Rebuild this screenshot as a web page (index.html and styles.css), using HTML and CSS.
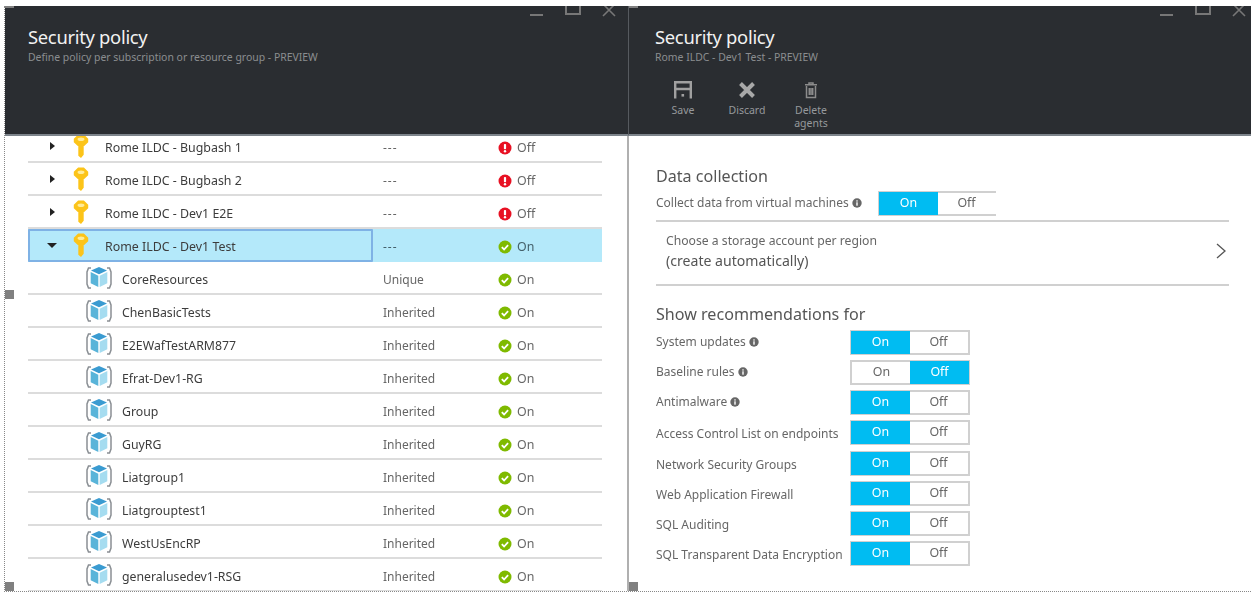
FILE: index.html
```html
<!DOCTYPE html>
<html lang="en">
<head>
    <meta charset="UTF-8">
    <title>Security policy</title>
    <link rel="stylesheet" href="styles.css">
</head>
<body>

<svg class="defs" width="0" height="0">
    <symbol id="key" viewBox="0 0 18 26">
        <path fill="#fcc419" d="M6 .5h6l4.500 4.500v3.500L12.300 12.500h-.5V21.500L9 25 6.200 22.500V12.500H5.700L1.500 8.500V5z"/>
        <ellipse cx="9" cy="5.500" rx="3.600" ry="1.900" fill="#ffec99"/>
    </symbol>
    <symbol id="cube" viewBox="0 0 26 24">
        <path fill="none" stroke="#8a8f94" stroke-width="1.500" d="M5 2H2.500L1 6v12l1.500 4H5M21 2h2.500L25 6v12l-1.500 4H21"/>
        <path fill="#3a9bd1" d="M13 1l8 3.500-8 3.800-8-3.800z"/>
        <path fill="#59b4d9" d="M4.700 6L12.300 9.700V21L4.700 17.300z"/>
        <path fill="#a5dcf0" d="M21.300 6L13.700 9.700V21l7.600-3.700z"/>
    </symbol>
    <symbol id="off-icon" viewBox="0 0 14 14">
        <circle cx="7" cy="7" r="6.500" fill="#e81123"/>
        <rect x="5.900" y="3" width="2.200" height="5.200" rx=".8" fill="#fff"/>
        <circle cx="7" cy="10.200" r="1.200" fill="#fff"/>
    </symbol>
    <symbol id="on-icon" viewBox="0 0 14 14">
        <circle cx="7" cy="7" r="6.500" fill="#7fba00"/>
        <path fill="none" stroke="#fff" stroke-width="1.800" d="M3.800 7.200l2.300 2.300 4-4.300"/>
    </symbol>
    <symbol id="info" viewBox="0 0 10 10">
        <circle cx="5" cy="5" r="4.700" fill="#666"/>
        <rect x="4.300" y="4.300" width="1.400" height="3.400" fill="#fff"/>
        <rect x="4.300" y="2.300" width="1.400" height="1.300" fill="#fff"/>
    </symbol>
</svg>

<div class="screen">

    <!-- Policy list -->
    <section class="blade blade-left">
        <header class="blade-head">
            <div class="win-controls">
                <svg width="14" height="12" viewBox="0 0 14 12"><path stroke="#777" stroke-width="2" d="M0 9h13"/></svg>
                <svg width="16" height="12" viewBox="0 0 16 12"><path fill="none" stroke="#777" stroke-width="2" d="M1 0v8h14V0"/></svg>
                <svg width="14" height="12" viewBox="0 0 14 12"><path fill="none" stroke="#777" stroke-width="1.600" d="M1-2l12 12M13-2L1 10"/></svg>
            </div>
            <h2 class="blade-title">Security policy</h2>
            <p class="blade-sub">Define policy per subscription or resource group - PREVIEW</p>
        </header>

        <div class="tree">
            <div class="row"><div class="cell-name"><i class="arrow"></i><svg class="key"><use href="#key"/></svg>Rome ILDC - Bugbash 1</div><div class="cell-type dashes">---</div><div class="cell-status"><svg class="status-icon"><use href="#off-icon"/></svg>Off</div></div>
            <div class="row"><div class="cell-name"><i class="arrow"></i><svg class="key"><use href="#key"/></svg>Rome ILDC - Bugbash 2</div><div class="cell-type dashes">---</div><div class="cell-status"><svg class="status-icon"><use href="#off-icon"/></svg>Off</div></div>
            <div class="row"><div class="cell-name"><i class="arrow"></i><svg class="key"><use href="#key"/></svg>Rome ILDC - Dev1 E2E</div><div class="cell-type dashes">---</div><div class="cell-status"><svg class="status-icon"><use href="#off-icon"/></svg>Off</div></div>
            <div class="row selected"><div class="cell-name"><i class="arrow open"></i><svg class="key"><use href="#key"/></svg>Rome ILDC - Dev1 Test</div><div class="cell-type dashes">---</div><div class="cell-status"><svg class="status-icon"><use href="#on-icon"/></svg>On</div></div>
            <div class="row child"><div class="cell-name"><svg class="cube"><use href="#cube"/></svg>CoreResources</div><div class="cell-type">Unique</div><div class="cell-status"><svg class="status-icon"><use href="#on-icon"/></svg>On</div></div>
            <div class="row child"><div class="cell-name"><svg class="cube"><use href="#cube"/></svg>ChenBasicTests</div><div class="cell-type">Inherited</div><div class="cell-status"><svg class="status-icon"><use href="#on-icon"/></svg>On</div></div>
            <div class="row child"><div class="cell-name"><svg class="cube"><use href="#cube"/></svg>E2EWafTestARM877</div><div class="cell-type">Inherited</div><div class="cell-status"><svg class="status-icon"><use href="#on-icon"/></svg>On</div></div>
            <div class="row child"><div class="cell-name"><svg class="cube"><use href="#cube"/></svg>Efrat-Dev1-RG</div><div class="cell-type">Inherited</div><div class="cell-status"><svg class="status-icon"><use href="#on-icon"/></svg>On</div></div>
            <div class="row child"><div class="cell-name"><svg class="cube"><use href="#cube"/></svg>Group</div><div class="cell-type">Inherited</div><div class="cell-status"><svg class="status-icon"><use href="#on-icon"/></svg>On</div></div>
            <div class="row child"><div class="cell-name"><svg class="cube"><use href="#cube"/></svg>GuyRG</div><div class="cell-type">Inherited</div><div class="cell-status"><svg class="status-icon"><use href="#on-icon"/></svg>On</div></div>
            <div class="row child"><div class="cell-name"><svg class="cube"><use href="#cube"/></svg>Liatgroup1</div><div class="cell-type">Inherited</div><div class="cell-status"><svg class="status-icon"><use href="#on-icon"/></svg>On</div></div>
            <div class="row child"><div class="cell-name"><svg class="cube"><use href="#cube"/></svg>Liatgrouptest1</div><div class="cell-type">Inherited</div><div class="cell-status"><svg class="status-icon"><use href="#on-icon"/></svg>On</div></div>
            <div class="row child"><div class="cell-name"><svg class="cube"><use href="#cube"/></svg>WestUsEncRP</div><div class="cell-type">Inherited</div><div class="cell-status"><svg class="status-icon"><use href="#on-icon"/></svg>On</div></div>
            <div class="row child"><div class="cell-name"><svg class="cube"><use href="#cube"/></svg>generalusedev1-RSG</div><div class="cell-type">Inherited</div><div class="cell-status"><svg class="status-icon"><use href="#on-icon"/></svg>On</div></div>
        </div>
    </section>

    <!-- Policy details -->
    <section class="blade blade-right">
        <header class="blade-head">
            <div class="win-controls">
                <svg width="14" height="12" viewBox="0 0 14 12"><path stroke="#777" stroke-width="2" d="M0 9h13"/></svg>
                <svg width="16" height="12" viewBox="0 0 16 12"><path fill="none" stroke="#777" stroke-width="2" d="M1 0v8h14V0"/></svg>
                <svg width="14" height="12" viewBox="0 0 14 12"><path fill="none" stroke="#777" stroke-width="1.600" d="M1-2l12 12M13-2L1 10"/></svg>
            </div>
            <h2 class="blade-title">Security policy</h2>
            <p class="blade-sub">Rome ILDC - Dev1 Test - PREVIEW</p>
            <div class="commands">
                <div class="command">
                    <svg width="18" height="18" viewBox="0 0 18 18"><path fill="none" stroke="#a0a0a0" stroke-width="2.400" d="M1.200 17.500V1.200h15.600v16.300M1.200 8h15.600"/><rect x="7.500" y="13" width="2.600" height="2.600" fill="#a0a0a0"/></svg>
                    <span>Save</span>
                </div>
                <div class="command">
                    <svg width="18" height="18" viewBox="0 0 18 18"><path fill="none" stroke="#a8a8a8" stroke-width="4" d="M2.500 2.500l13 13M15.500 2.500l-13 13"/></svg>
                    <span>Discard</span>
                </div>
                <div class="command">
                    <svg width="18" height="18" viewBox="0 0 18 18"><path fill="none" stroke="#8c8c8c" stroke-width="1.500" d="M4.500 5v11.500h9V5M3 3.800h12M7 3.800V2h4v1.800M7.300 7v7M9 7v7M10.700 7v7"/></svg>
                    <span>Delete agents</span>
                </div>
            </div>
        </header>

        <div class="details">
            <h3 class="section-title">Data collection</h3>
            <div class="setting collect">
                <span class="setting-label has-info">Collect data from virtual machines <svg class="info"><use href="#info"/></svg></span>
                <div class="toggle open-end"><span class="active">On</span><span>Off</span></div>
            </div>

            <div class="storage">
                <div>
                    <p class="storage-title">Choose a storage account per region</p>
                    <p class="storage-value">(create automatically)</p>
                </div>
                <svg width="10" height="16" viewBox="0 0 10 16"><path fill="none" stroke="#555" stroke-width="1.300" d="M1 1l8 7-8 7"/></svg>
            </div>

            <h3 class="section-title recs-title">Show recommendations for</h3>
            <div class="settings">
                <div class="setting"><span class="setting-label has-info">System updates <svg class="info"><use href="#info"/></svg></span><div class="toggle"><span class="active">On</span><span>Off</span></div></div>
                <div class="setting"><span class="setting-label has-info">Baseline rules <svg class="info"><use href="#info"/></svg></span><div class="toggle"><span>On</span><span class="active">Off</span></div></div>
                <div class="setting"><span class="setting-label has-info">Antimalware <svg class="info"><use href="#info"/></svg></span><div class="toggle"><span class="active">On</span><span>Off</span></div></div>
                <div class="setting"><span class="setting-label">Access Control List on endpoints</span><div class="toggle"><span class="active">On</span><span>Off</span></div></div>
                <div class="setting"><span class="setting-label">Network Security Groups</span><div class="toggle"><span class="active">On</span><span>Off</span></div></div>
                <div class="setting"><span class="setting-label">Web Application Firewall</span><div class="toggle"><span class="active">On</span><span>Off</span></div></div>
                <div class="setting"><span class="setting-label">SQL Auditing</span><div class="toggle"><span class="active">On</span><span>Off</span></div></div>
                <div class="setting"><span class="setting-label">SQL Transparent Data Encryption</span><div class="toggle"><span class="active">On</span><span>Off</span></div></div>
            </div>
        </div>
    </section>

    <!-- Selection handles from the pasted picture -->
    <i class="handle handle-mid"></i>
    <i class="handle handle-low"></i>
    <i class="handle handle-center"></i>
    <i class="handle-top handle-top-left"></i>
    <i class="handle-top handle-top-center"></i>
</div>

</body>
</html>
```

FILE: styles.css
```css
* {
    box-sizing: border-box;
}

body {
    margin: 0;
    height: 596px;
    background-color: #fff;
    font-family: "Noto Sans", "Open Sans", sans-serif;
    color: #555;
    overflow: hidden;
}

.defs {
    display: block;
    height: 0;
}

p, h2, h3 {
    margin: 0;
    font-weight: normal;
}

.screen {
    position: relative;
    display: flex;
    width: 1247px;
    height: 586px;
    margin: 6px 0 0 4px;
    border-left: 1px dotted #888;
    border-bottom: 1px dotted #888;
    filter: blur(0.35px);
}

.blade {
    display: flex;
    flex-direction: column;
    height: 100%;
    overflow: hidden;
}

.blade-left {
    width: 624px;
    flex: none;
}

.blade-right {
    flex: 1;
    min-width: 0;
}

.blade-head {
    position: relative;
    flex: none;
    height: 130px;
    background-color: #2a2d31;
    border-bottom: 2px solid #7d848b;
    padding: 19px 0 0 23px;
}

.blade-left .blade-head {
    border-right: 1px solid #565a5f;
}

.blade-right .blade-head {
    padding-left: 26px;
}

.blade-title {
    font-size: 18.400px;
    line-height: 24px;
    color: #f2f2f2;
    letter-spacing: -0.300px;
}

.blade-sub {
    font-size: 10.450px;
    line-height: 14px;
    margin-top: 1px;
    color: #8a8d90;
}

.win-controls {
    position: absolute;
    top: 0;
    right: 12px;
    display: flex;
    gap: 21px;
}

.blade-right .win-controls {
    right: 5px;
}

/* command bar */
.commands {
    display: flex;
    margin: 17px 0 0 -4px;
}

.command {
    display: flex;
    flex-direction: column;
    align-items: center;
    width: 64px;
    font-size: 10.500px;
    line-height: 13px;
    color: #96999c;
    text-align: center;
}

.command svg {
    margin-bottom: 5px;
}

.command span {
    width: 40px;
}

/* tree list */
.tree {
    flex: 1;
    margin-top: -6px;
    padding: 0 25px 0 23px;
    border-right: 2px solid #b0b0b0;
}

.row {
    display: flex;
    align-items: center;
    height: 33px;
    padding-top: 4px;
    font-size: 12.400px;
    border-bottom: 2px solid #dcdcdc;
}

.cell-name {
    display: flex;
    align-items: center;
    width: 345px;
    height: 100%;
    padding-left: 22px;
    color: #3c3c3c;
    flex: none;
}

.child .cell-name {
    padding-left: 58px;
    font-size: 12.300px;
}

.cell-type {
    width: 125px;
    padding-left: 10px;
    font-size: 12px;
    color: #666;
    flex: none;
}

.dashes {
    letter-spacing: 1px;
}

.cell-status {
    display: flex;
    align-items: center;
    font-size: 12.400px;
    color: #666;
}

.arrow {
    width: 0;
    height: 0;
    margin-right: 17px;
    margin-top: -3px;
    border-top: 4.500px solid transparent;
    border-bottom: 4.500px solid transparent;
    border-left: 5px solid #222;
}

.arrow.open {
    margin-left: -3px;
    margin-right: 15px;
    border-left: 5.500px solid transparent;
    border-right: 5.500px solid transparent;
    border-top: 5px solid #222;
    border-bottom: 0;
}

.key {
    width: 18px;
    height: 25px;
    margin: -3px 15px 0 0;
    flex: none;
}

.cube {
    width: 26px;
    height: 24px;
    margin: -3px 10px 0 0;
    flex: none;
}

.status-icon {
    width: 14px;
    height: 14px;
    margin-right: 5px;
    flex: none;
}

.selected {
    background-color: #b4e9fa;
    border-bottom: 0;
    padding-top: 0;
}

.selected .cell-name {
    border: 2px solid #7fb2e5;
    padding: 2px 0 0 20px;
    border-radius: 1px;
}

.selected .cell-type,
.selected .cell-status {
    margin-top: 2px;
    color: #44606a;
}

/* settings panel */
.details {
    padding: 28px 22px 0 27px;
}

.section-title {
    font-size: 16.100px;
    line-height: 24px;
    color: #555;
}

.recs-title {
    margin-top: 16px;
}

.setting {
    display: flex;
    align-items: center;
    justify-content: space-between;
    width: 314px;
    font-size: 12px;
    color: #666;
}

.setting-label {
    display: flex;
    align-items: center;
    gap: 3px;
    padding-top: 2px;
    white-space: nowrap;
}

.has-info {
    padding: 0 0 2px;
}

.collect {
    width: 340px;
    margin-top: 3px;
    padding-bottom: 4px;
}

.info {
    width: 10px;
    height: 10px;
}

.settings {
    display: flex;
    flex-direction: column;
    gap: 5.150px;
    margin-top: 4px;
}

.toggle {
    display: flex;
    width: 120px;
    height: 25px;
    border: 2px solid #d0d0d0;
    font-size: 12.400px;
    background-color: #fff;
}

.toggle span {
    flex: 1;
    text-align: center;
    line-height: 20px;
    color: #666;
}

.toggle .active {
    background-color: #00bcf2;
    color: #fff;
    margin: -1px;
    line-height: 22px;
}

.open-end {
    border-right: 0;
    width: 118px;
}

.storage {
    display: flex;
    align-items: center;
    justify-content: space-between;
    height: 66px;
    padding: 0 3px 4px 10px;
    border-top: 2px solid #d0d0d0;
    border-bottom: 2px solid #d0d0d0;
}

.storage-title {
    font-size: 12.200px;
    line-height: 18px;
    color: #666;
}

.storage-value {
    font-size: 14.100px;
    line-height: 21px;
    color: #555;
}

/* gray handles on top of the picture */
.handle {
    position: absolute;
    width: 9px;
    height: 9px;
    background-color: #808080;
}

.handle-mid {
    left: 0;
    top: 284px;
}

.handle-low {
    left: 0;
    bottom: 0;
}

.handle-center {
    left: 624px;
    bottom: 0;
}

.handle-top {
    position: absolute;
    top: 0;
    width: 9px;
    height: 2px;
    background-color: #808080;
}

.handle-top-left {
    left: 0;
}

.handle-top-center {
    left: 624px;
}
```
